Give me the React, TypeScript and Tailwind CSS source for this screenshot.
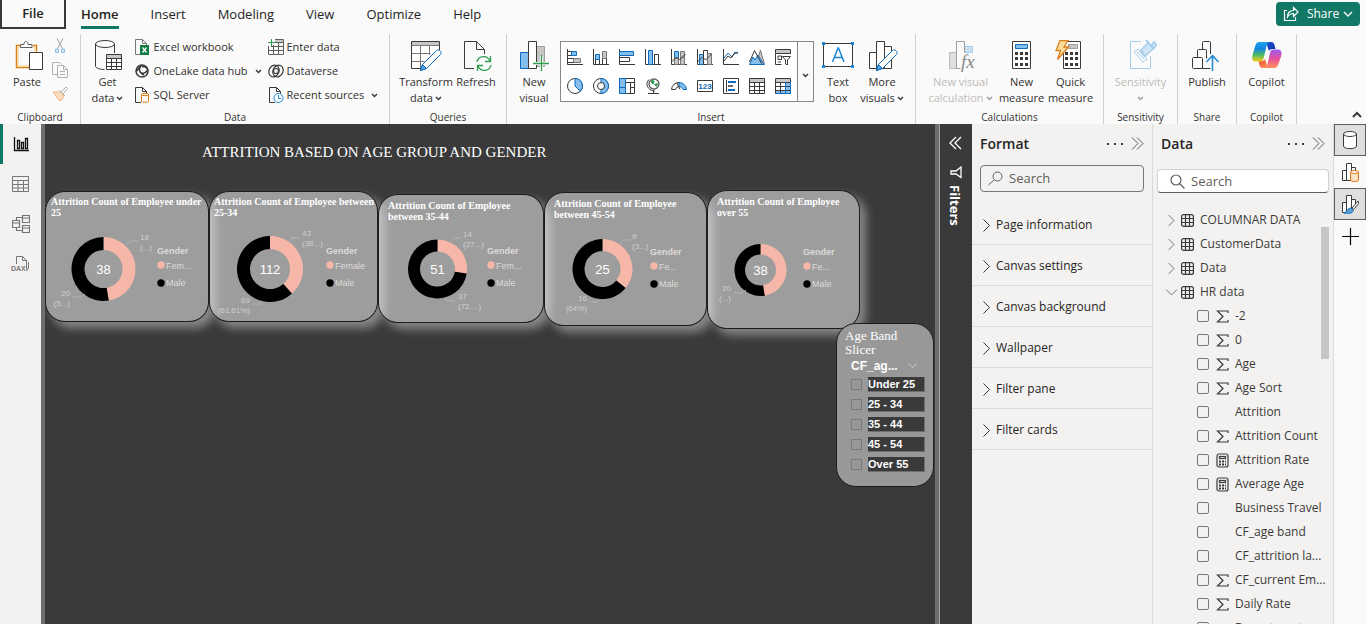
import React from "react";

type Kids = { children?: React.ReactNode };

/* ---------- icon helpers ---------- */
function Ico({ w, h, c = "#3b3a39", sw = 1, children }: { w: number; h: number; c?: string; sw?: number } & Kids) {
  return (
    <svg width={w} height={h} viewBox={`0 0 ${w} ${h}`} fill="none" stroke={c} strokeWidth={sw} className="shrink-0" aria-hidden="true">
      {children}
    </svg>
  );
}
const D = "#3b3a39";
const B = "#0f6cbd";
const LB = "#83beec";
const G = "#c8c6c4";

function Down({ c = D }: { c?: string }) {
  return (
    <Ico w={7} h={5} c={c} sw={1.5}><path d="M1 1l2.5 2.5L6 1" /></Ico>
  );
}

const PasteIcon = () => (
  <Ico w={32} h={32}>
    <path d="M9 5.500H5.500v22H18M22 5.500h3.500v6" stroke="#d97f1d" strokeWidth="1.500" />
    <path d="M9 7H7v19h11M22 7h2v4.500" stroke="#fbdc9b" strokeWidth="1.500" />
    <path d="M9.500 7.500v-3h3.500c0-4 4-4 4 0h4v3z" fill="#fff" stroke="#605e5c" />
    <path d="M18.500 12.500h13v17h-13z" fill="#fff" />
  </Ico>
);
const GetDataIcon = () => (
  <Ico w={32} h={32}>
    <path d="M3.500 4v22c0 2 4 3.500 9 3.500M22.500 4v9" />
    <ellipse cx="13" cy="4" rx="9.500" ry="3.500" />
    <path d="M14.500 14.500h15v15h-15z" fill="#fff" />
    <path d="M15 15h14v3H15z" fill={G} stroke="none" />
    <path d="M14.500 18.500h15M14.500 22.500h15M14.500 26.500h15M19.500 18v11M24.500 18v11" />
  </Ico>
);
const PENCIL = "M10 26l14-14c2-2 6 1 4 4L14 30l-6 2z";
const TransformIcon = () => (
  <Ico w={32} h={32}>
    <path d="M1.500 1.500h27v27h-27z" fill="#fff" stroke="none" />
    <path d="M29.500 10V1.500h-28v27h10" />
    <path d="M2 2h27v3.500H2z" fill={G} stroke="none" />
    <path d="M1.500 5.500h28M1.500 13.500h19M1.500 21.500h13M10.500 5v23M19.500 5v10" stroke="#797775" />
    <path d={PENCIL} fill="#fff" stroke={B} transform="translate(2.500 -1.500)" />
    <path d="M10.500 30.500l2-6 4 4z" fill="#5aa5de" stroke={B} />
  </Ico>
);
const RefreshIcon = () => (
  <Ico w={32} h={32}>
    <path d="M14 28.500H4.500v-27h12l8 8V14M16.500 1.500v8h8" />
    <path d="M17 22c1-6 10-8 13-1M30.500 16v5.500H25M31 25c-1 6-10 8-13 1M17.500 31v-5.500H23" stroke="#2f9e4f" strokeWidth="1.300" />
  </Ico>
);
const NewVisualIcon = () => (
  <Ico w={32} h={32}>
    <path d="M2.500 12.500h8v16h-8z" fill={LB} stroke={B} />
    <path d="M18.500 6.500h8v20h-8z" fill={G} stroke="#a19f9d" />
    <path d="M10.500 1.500h8v27h-8z" fill="#fff" />
    <path d="M16 23.500h15M23.500 16v15" stroke="#fafafa" strokeWidth="3" />
    <path d="M15 23.500h16M23.500 15v16" stroke="#2f9e4f" strokeWidth="1.300" />
  </Ico>
);
const TextBoxIcon = () => (
  <Ico w={32} h={32}>
    <path d="M1.500 3.500h29v23h-29z" fill="#fff" />
    <path d="M10.500 22l5.500-14h.500L22 22M12.500 17.500h7.500" stroke="#1c87d4" strokeWidth="1.500" />
    <path d="M0 2h3v3H0zM29 2h3v3h-3zM0 25h3v3H0zM29 25h3v3h-3z" fill="#1c87d4" stroke="none" />
  </Ico>
);
const MoreVisualsIcon = () => (
  <Ico w={32} h={32}>
    <path d="M3.500 12.500h7v16h-7zM10.500 1.500h8v27h-8zM18.500 6.500h7v22h-7z" fill="#fff" />
    <path d={PENCIL} fill="#fff" stroke={B} transform="translate(2.500 -1.500)" />
    <path d="M10.500 30.500l2-6 4 4z" fill="#5aa5de" stroke={B} />
  </Ico>
);
const VisualCalcIcon = () => (
  <Ico w={32} h={32} c="#a19f9d">
    <path d="M4.500 12.500h7v16h-7z" fill="#e1dfdd" stroke="#bebbb8" />
    <path d="M19.500 6.500h8v6h-8z" fill="#c7e0f4" stroke="#a6cdea" />
    <path d="M11.500 28.500v-27h8v11M11.500 28.500h4" />
    <text x="16" y="28" fontFamily="Liberation Serif, serif" fontStyle="italic" fontSize="19" fill="#8a8886" stroke="none">fx</text>
  </Ico>
);
const dots = [9, 14, 19].flatMap((x) => [13, 18, 24].map((y) => [x, y]));
const MeasureIcon = () => (
  <Ico w={32} h={32}>
    <path d="M6.500 1.500h18v27h-18z" fill="#fff" />
    <path d="M9.500 4.500h12v4h-12z" fill={LB} stroke={B} />
    {dots.map(([x, y]) => <rect key={`${x}-${y}`} x={x} y={y - 1} width="3" height="3" fill={D} stroke="none" />)}
  </Ico>
);
const QuickIcon = () => (
  <Ico w={32} h={32}>
    <path d="M8.500 1.500h17v27h-17z" fill="#fff" />
    <path d="M13.500 4.500h9v4h-9z" fill={G} stroke="#a19f9d" />
    {dots.map(([x, y]) => <rect key={`${x}-${y}`} x={x + 1} y={y - 1} width="3" height="3" fill={D} stroke="none" />)}
    <path d="M5 .500h8L9 7h4.500L2.500 19.500l3-9H1z" fill="#fbdc9b" stroke="#d97f1d" strokeWidth="1.300" />
  </Ico>
);
const SensitivityIcon = () => (
  <Ico w={32} h={32} c="#a6cdea">
    <path d="M16 1.500H5.500v27h20V16" />
    <path d="M9 12l4-3 9 10-4 3zM12 12l7 7M14.500 11l5 6" />
    <path d="M16 10l7-7 3 3 3-4 3 3-4 4-8 7z" fill="#d0e6f6" strokeWidth="1.500" />
    <path d="M21 0l8 9" strokeWidth="2" />
  </Ico>
);
const PublishIcon = () => (
  <Ico w={32} h={32}>
    <path d="M11.500 9.500v-7q0-1 1-1h6q1 0 1 1V14M1.500 27.500v-9q0-1 1-1h8q1 0 1 1v10h-9q-1 0-1-1zM6.500 17v-6.500q0-1 1-1h7q1 0 1 1v8M11.500 28.500h8" />
    <path d="M21.500 31V15.500M15.500 22l6-6.500 6 6.500" stroke="#1c87d4" strokeWidth="1.500" />
  </Ico>
);
const CopilotIcon = () => (
  <svg width="32" height="32" viewBox="0 0 32 32" aria-hidden="true">
    <defs>
      <linearGradient id="cpA" x1="0" y1="0" x2="0" y2="1"><stop offset="0" stopColor="#1aa3f0" /><stop offset=".35" stopColor="#1487e0" /><stop offset=".65" stopColor="#4bb86a" /><stop offset="1" stopColor="#f4cf12" /></linearGradient>
      <linearGradient id="cpB" x1="0" y1="0" x2="0" y2="1"><stop offset="0" stopColor="#9a5bf0" /><stop offset=".5" stopColor="#e8519a" /><stop offset="1" stopColor="#ff8f5a" /></linearGradient>
      <linearGradient id="cpC" x1="0" y1="0" x2="1" y2="1"><stop offset="0" stopColor="#1450d8" /><stop offset="1" stopColor="#1733a8" /></linearGradient>
      <linearGradient id="cpD" x1="0" y1="0" x2="1" y2="1"><stop offset="0" stopColor="#f0483e" /><stop offset="1" stopColor="#ff9a4e" /></linearGradient>
    </defs>
    <path d="M15 2h5c2 0 3 1 3.500 3l1 4h-3c-2 0-3 1-3.500 2z" fill="url(#cpC)" />
    <path d="M17 28h-5c-2 0-3-1-3.500-3l-1-4h3c2 0 3-1 3.500-2z" fill="url(#cpD)" />
    <path d="M19 2H8.500C6 2 5 3.500 4.200 6L1.500 15c-1 4 0 6.500 3.500 6.500h4c2 0 3-1 3.600-3L15.500 6c.600-2.500 1.500-4 3.500-4z" fill="url(#cpA)" />
    <path d="M13 28h10c2.500 0 3.600-1.500 4.400-4l2.800-8c1-4 0-6.500-3.500-6.500h-4c-2 0-3 1-3.600 3L16.500 24c-.600 2.500-1.500 4-3.500 4z" fill="url(#cpB)" />
  </svg>
);

/* ---------- 16px icons ---------- */
const CutIcon = () => (
  <Ico w={16} h={16} c="#a19f9d">
    <path d="M5 .500l5.500 10M11 .500L5.500 10.500" />
    <path d="M3.500 11h3v3.500h-3zM9.500 11h3v3.500h-3z" stroke="#8cc0e4" fill="#d0e6f6" />
  </Ico>
);
const CopyIcon = () => (
  <Ico w={16} h={16} c="#b3b0ad">
    <path d="M5 12.500H.500v-12h7l2 2" />
    <path d="M5.500 3.500h6l4 4v8h-10zM11.500 3.500v4h4M8 9.500h5M8 12.500h5" />
  </Ico>
);
const BrushIcon = () => (
  <Ico w={16} h={16} c="#b3b0ad">
    <path d="M1 6l5 7 3 2 3-5-5-4z" fill="#fbdcc0" stroke="#eeb78a" />
    <path d="M7 4l6 6M9 6l5-5 1.500 1.500L11 8" />
  </Ico>
);
const DOC = "M6 15.500H.500V.500h7l4 4V7M7.500.500v4h4";
const ExcelIcon = () => (
  <Ico w={16} h={16}>
    <path d={DOC} stroke="#797775" />
    <path d="M5 6h9v10H5z" fill="#107c41" stroke="none" />
    <path d="M7.500 8.500l4 5M11.500 8.500l-4 5" stroke="#fff" strokeWidth="1.300" />
  </Ico>
);
const OneLakeIcon = () => (
  <Ico w={16} h={16} sw={1.5}>
    <circle cx="7" cy="8" r="6" />
    <path d="M1 8c3-1 3-5 6-6M6 3c-3 3-1 8 3 9M13 6c-2 5-6 5-8 3M7 4c2-1 5 0 6 3" />
  </Ico>
);
const SqlIcon = () => (
  <Ico w={16} h={16}>
    <path d={DOC} />
    <path d="M6.500 7.500v7c0 1 7 1 7 0v-7" fill="#fff" stroke="#e07414" />
    <ellipse cx="10" cy="7.500" rx="3.500" ry="1.200" stroke="#e07414" fill="#fff" />
  </Ico>
);
const EnterIcon = () => (
  <Ico w={16} h={16}>
    <path d="M7 1h9v2H7z" fill={G} stroke="none" />
    <path d="M7 .500h8.500v15H.500V7M3 7.500h12.500M.500 11.500h15M5.500 6v9.500M10.500 3.500v12M7 3.500h8.500" stroke="#605e5c" />
    <path d="M0 3.500h7M3.500 0v7" stroke="#2f9e4f" />
  </Ico>
);
const DataverseIcon = () => (
  <Ico w={16} h={16} sw={1.2}>
    <ellipse cx="6" cy="8" rx="5" ry="6" transform="rotate(25 6 8)" />
    <ellipse cx="10" cy="8" rx="5" ry="6" transform="rotate(25 10 8)" />
    <circle cx="8" cy="8" r="2.500" />
  </Ico>
);
const RecentIcon = () => (
  <Ico w={16} h={16}>
    <path d={DOC} transform="translate(1 0)" />
    <circle cx="10.500" cy="11" r="4.500" stroke="#1c87d4" fill="#fff" />
    <path d="M10.500 8v3.500H13" stroke="#1c87d4" />
  </Ico>
);

const AX = "M.500 0v15.500H16";
const gallery: { label: string; art: React.ReactNode }[] = [
  { label: "Stacked bar chart", art: <><path d={AX} /><path d="M.500 2.500h4v4h-4z" /><path d="M4.500 2.500h5v4h-5z" fill={LB} stroke={B} /><path d="M.500 9.500h6v4h-6z" /><path d="M6.500 9.500h7v4h-7z" fill={G} stroke="#797775" /></> },
  { label: "Stacked column chart", art: <><path d={AX} /><path d="M2.500 10.500h4v5h-4z" /><path d="M2.500 5.500h4v5h-4z" fill={LB} stroke={B} /><path d="M9.500 9.500h4v6h-4z" /><path d="M9.500 2.500h4v7h-4z" fill={G} stroke="#797775" /></> },
  { label: "Clustered bar chart", art: <><path d={AX} /><path d="M.500 2.500h14v4H.500z" fill={LB} stroke={B} /><path d="M.500 8.500h10v4H.500z" fill="#fff" /></> },
  { label: "Clustered column chart", art: <><path d={AX} /><path d="M3.500 1.500h4v14h-4z" fill={LB} stroke={B} /><path d="M9.500 5.500h4v10h-4z" fill="#fff" /></> },
  { label: "Line and stacked column chart", art: <><path d={AX} /><path d="M9.500 2.500h4v6h-4z" fill={G} stroke="#797775" /><path d="M3.500 2.500h4v7h-4z" fill={LB} stroke={B} /><path d="M3.500 9.500h4v6h-4zM9.500 8.500h4v7h-4z" fill={G} stroke="#797775" /><path d="M.500 13l5-5 3 3 6-6" /></> },
  { label: "Line and clustered column chart", art: <><path d={AX} /><path d="M2.500 5.500h4v10h-4z" fill={LB} stroke={B} /><path d="M6.500 1.500h4v14h-4z" fill="#fff" /><path d="M10.500 4.500h4v11h-4z" fill={G} stroke="#797775" /><path d="M.500 13l5-5 3 3 6-6" /></> },
  { label: "Line chart", art: <><path d={AX} /><path d="M1 9l4-5 4 4 3-5 3 2" stroke={B} /><path d="M1 12l4-5 3 2 3-4 4-2" /></> },
  { label: "Area chart", art: <><path d="M7 15.500L11.500 1l4 14.500z" fill={G} stroke="#797775" /><path d="M.500 15.500L4 8l2 3 3-5 6 9.500z" fill={LB} stroke={B} /><path d="M.500 13l5-11.500 7 13" /></> },
  { label: "Slicer", art: <><path d="M.500.500h15v4H.500z" fill={G} /><path d="M.500 4.500v11h6M3 7h3.500v3.500H3zM3 13h3" /><path d="M7.500 7.500h8L12.500 11v5l-2-1v-4z" fill="#fff" /></> },
  { label: "Pie chart", art: <><circle cx="8" cy="8" r="7.500" fill="#fff" /><path d="M8 8V.500a7.500 7.500 0 0 1 5.300 12.800z" fill={LB} stroke={B} /></> },
  { label: "Donut chart", art: <><circle cx="8" cy="8" r="7.500" fill="#fff" /><path d="M8 .500a7.500 7.500 0 0 1 0 15v-4a3.500 3.500 0 0 0 0-7z" fill={LB} stroke={B} /><circle cx="8" cy="8" r="3.500" fill="#fff" /></> },
  { label: "Treemap", art: <><path d="M.500.500h15v15H.500z" fill="#fff" /><path d="M.500.500h6v15h-6z" fill={LB} stroke={B} /><path d="M.500 9.500h6" stroke={B} /><path d="M6.500 4.500h9M11.500 4v11M11.500 9.500h4" /></> },
  { label: "Map", art: <><circle cx="9" cy="6" r="5" fill="#fff" stroke="#605e5c" strokeWidth="1.300" /><path d="M6 4l2-2 1 2-1 2zM9.500 6.500l3-1-1 3z" fill="#2f9e4f" stroke="#2f9e4f" /><path d="M4 1.500c-4 4-2 11 6 11.500M8.500 13v2.500M3 15.500h11" /></> },
  { label: "Gauge", art: <><path d="M.500 11.500a7.500 7.500 0 0 1 8-7l0 4a4 4 0 0 0-4 3z" fill="#fff" /><path d="M8 4.500a7.500 7.500 0 0 1 7.500 7H12a4 4 0 0 0-4-3z" fill={LB} stroke={B} /><path d="M6 5l3 6.500" /></> },
  { label: "Card", art: <><path d="M.500 2.500h15v11H.500z" fill="#fff" /><text x="8" y="11" textAnchor="middle" fontSize="8" fontWeight="700" fontFamily="Liberation Sans, sans-serif" fill={B} stroke="none">123</text></> },
  { label: "Multi-row card", art: <><path d="M.500.500h15v15H.500z" fill="#fff" /><path d="M3.500 2v12" stroke={D} /><path d="M5 4h8M5 12h7" stroke={B} strokeWidth="2" /><path d="M5 8h5" strokeWidth="1.500" /></> },
  { label: "Table", art: <><path d="M.500.500h15v15H.500z" fill="#fff" /><path d="M1 1h14v3H1z" fill={G} stroke="none" /><path d="M.500 4.500h15M.500 8.500h15M.500 12.500h15M5.500 4v11M10.500 4v11" /></> },
  { label: "Matrix", art: <><path d="M.500.500h15v15H.500z" fill="#fff" /><path d="M1 1h14v3H1z" fill={G} stroke="none" /><path d="M11 5h4v10h-4zM1 12h14v3H1z" fill={LB} stroke="none" /><path d="M.500 4.500h15M.500 8.500h15M.500 12.500h15M5.500 4v11" /><path d="M10.500 4v11M15.500 4v11.500H.500" stroke={B} /></> },
];

/* ---------- ribbon ---------- */
function Group({ label, w, children }: { label: string; w: string } & Kids) {
  return (
    <section className={`flex shrink-0 flex-col border-r border-[#d2d0ce] ${w}`} aria-label={label}>
      <div className="flex flex-1 items-start justify-center">{children}</div>
      <div className="h-[13px] text-center text-[10px] leading-3 text-[#323130]">{label}</div>
    </section>
  );
}
function Big({ icon, a, b, w, drop, off }: { icon: React.ReactNode; a: string; b?: string; w: string; drop?: boolean; off?: boolean }) {
  return (
    <button type="button" disabled={off} className={`flex shrink-0 flex-col items-center pt-1.5 text-[11px] leading-4 whitespace-nowrap ${w} ${off ? "text-[#bebbb8]" : "text-[#323130]"}`}>
      {icon}
      <span className="pt-0.5">{a}</span>
      <span className="flex h-4 items-center gap-0.5">{b}{drop && <Down c={off ? "#a19f9d" : D} />}</span>
    </button>
  );
}
function Small({ icon, t, drop }: { icon: React.ReactNode; t: string; drop?: boolean }) {
  return (
    <button type="button" className="flex h-6 items-center gap-[3px] text-[11px] whitespace-nowrap text-[#323130]">
      {icon}<span>{t}</span>{drop && <span className="pl-1"><Down /></span>}
    </button>
  );
}

const tabs = ["Insert", "Modeling", "View", "Optimize", "Help"];

function Ribbon() {
  return (
    <header className="shrink-0 bg-[#fafafa]">
      <div className="flex h-[29px] items-stretch text-[13px] text-[#252423]">
        <button type="button" className="w-[66px] border-2 border-t-0 border-[#3b3a39] font-semibold">File</button>
        <nav className="flex items-stretch gap-8 pl-[15px]">
          <button type="button" className="relative font-semibold">
            Home
            <span className="absolute inset-x-0 bottom-0 h-[3px] bg-[#117865]" />
          </button>
          {tabs.map((t) => <button key={t} type="button">{t}</button>)}
        </nav>
        <button type="button" className="mt-0.5 mr-1.5 ml-auto flex h-6 w-[84px] items-center justify-center gap-2 rounded-sm bg-[#117865] text-[12px] font-medium text-white">
          <Ico w={16} h={16} c="#fff" sw={1.2}><path d="M4 4.500H1.500v10h11V11M4.500 11c0-4 2-6.500 6-6.500V1.500L15 6l-4.500 4.500V7.500c-3 0-4.500 1-6 3.500z" /></Ico>
          <span className="flex items-center gap-1">Share<Ico w={10} h={7} c="#fff" sw={1.3}><path d="M1 1l4 4 4-4" /></Ico></span>
        </button>
      </div>
      <div className="flex pt-[5px]">
        <div className="flex h-[90px] grow">
          <Group label="Clipboard" w="w-[81px]">
            <Big icon={<PasteIcon />} a="Paste" w="w-[42px]" />
            <div className="flex flex-col gap-2 pt-1 pr-1.5 pl-1">
              <button type="button" aria-label="Cut"><CutIcon /></button>
              <button type="button" aria-label="Copy"><CopyIcon /></button>
              <button type="button" aria-label="Format painter"><BrushIcon /></button>
            </div>
          </Group>
          <Group label="Data" w="w-[309px]">
            <Big icon={<GetDataIcon />} a="Get" b="data" drop w="w-[42px]" />
            <div className="flex w-[139px] flex-col items-start pt-px pl-1.5">
              <Small icon={<ExcelIcon />} t="Excel workbook" />
              <Small icon={<OneLakeIcon />} t="OneLake data hub" drop />
              <Small icon={<SqlIcon />} t="SQL Server" />
            </div>
            <div className="flex w-[116px] flex-col items-start pt-px">
              <Small icon={<EnterIcon />} t="Enter data" />
              <Small icon={<DataverseIcon />} t="Dataverse" />
              <Small icon={<RecentIcon />} t="Recent sources" drop />
            </div>
          </Group>
          <Group label="Queries" w="w-[117px]">
            <Big icon={<TransformIcon />} a="Transform" b="data" drop w="w-14" />
            <Big icon={<RefreshIcon />} a="Refresh" w="w-11" />
          </Group>
          <Group label="Insert" w="w-[409px]">
            <Big icon={<NewVisualIcon />} a="New" b="visual" w="w-[52px]" />
            <div className="mt-[7px] flex border border-[#8a8886] bg-white">
              <div className="grid grid-cols-9 gap-x-2.5 gap-y-[13px] px-1.5 py-[7px]">
                {gallery.map((g) => (
                  <button key={g.label} type="button" aria-label={g.label}><Ico w={16} h={16}>{g.art}</Ico></button>
                ))}
              </div>
              <button type="button" aria-label="More" className="flex w-4 items-center justify-center border-l border-[#8a8886] bg-[#fafafa] pt-2"><Down /></button>
            </div>
            <Big icon={<TextBoxIcon />} a="Text" b="box" w="w-12" />
            <div className="pr-3"><Big icon={<MoreVisualsIcon />} a="More" b="visuals" drop w="w-10" /></div>
          </Group>
          <Group label="Calculations" w="w-[188px]">
            <Big icon={<VisualCalcIcon />} a="New visual" b="calculation" drop off w="w-[74px]" />
            <Big icon={<MeasureIcon />} a="New" b="measure" w="w-12" />
            <Big icon={<QuickIcon />} a="Quick" b="measure" w="w-[50px]" />
          </Group>
          <Group label="Sensitivity" w="w-[74px]"><Big icon={<SensitivityIcon />} a="Sensitivity" drop off w="w-16" /></Group>
          <Group label="Share" w="w-[59px]"><Big icon={<PublishIcon />} a="Publish" w="w-12" /></Group>
          <Group label="Copilot" w="w-[60px]"><Big icon={<CopilotIcon />} a="Copilot" w="w-12" /></Group>
        </div>
        <button type="button" aria-label="Collapse ribbon" className="self-end pr-1 pb-1.5"><Ico w={10} h={7} sw={2}><path d="M1 6l4-4 4 4" /></Ico></button>
      </div>
    </header>
  );
}

/* ---------- report canvas ---------- */
type Donut = {
  title: string; box: string; pad: string; w: number; h: number;
  cx: number; cy: number; R: number; r: number; total: string; share: number;
  labels: { x: number; y: number; end?: boolean; t: [string, string]; line: string }[];
  lx: number; ly: number; fem: string;
};
const donuts: Donut[] = [
  { title: "Attrition Count of Employee under 25", box: "left-[4px] top-[67px] w-[164px] h-[131px]", pad: "pl-[5px] pr-[5px] pt-[4px]", w: 162, h: 129, cx: 57.5, cy: 77, R: 32, r: 19, total: "38", share: 18 / 38,
    labels: [{ x: 94, y: 48, t: ["18", "(...)"], line: "M80 53l4-4h8" }, { x: 24, y: 104, end: true, t: ["20", "(5...)"], line: "M27 105h8l4-3" }], lx: 111, ly: 59, fem: "Fem..." },
  { title: "Attrition Count of Employee between 25-34", box: "left-[168px] top-[67px] w-[169px] h-[131px]", pad: "pl-[4px] pt-[4px]", w: 167, h: 129, cx: 60, cy: 77, R: 33, r: 20, total: "112", share: 43 / 112,
    labels: [{ x: 92, y: 44, t: ["43", "(38...)"], line: "M79 50l3-4h8" }, { x: 40, y: 111, end: true, t: ["69", "(61.61%)"], line: "M43 112h8v-3" }], lx: 116, ly: 59, fem: "Female" },
  { title: "Attrition Count of Employee between 35-44", box: "left-[337px] top-[70px] w-[166px] h-[129px]", pad: "px-[9px] pt-[5px]", w: 164, h: 127, cx: 58.5, cy: 74, R: 29.5, r: 17.5, total: "51", share: 14 / 51,
    labels: [{ x: 84, y: 42, t: ["14", "(27...)"], line: "M72 46l3-3h7" }, { x: 79, y: 104, t: ["37", "(72....)"], line: "M67 102v4h9" }], lx: 108, ly: 56, fem: "Fem..." },
  { title: "Attrition Count of Employee between 45-54", box: "left-[503px] top-[68px] w-[163px] h-[134px]", pad: "px-[9px] pt-[5px]", w: 161, h: 132, cx: 57.5, cy: 76, R: 30, r: 18, total: "25", share: 9 / 25,
    labels: [{ x: 87, y: 46, t: ["9", "(3...)"], line: "M75 51l3-4h7" }, { x: 42, y: 108, end: true, t: ["16", "(64%)"], line: "M45 109h8v-2" }], lx: 105, ly: 59, fem: "Fe..." },
  { title: "Attrition Count of Employee over 55", box: "left-[666px] top-[66px] w-[153px] h-[139px]", pad: "px-[9px] pt-[5px]", w: 151, h: 137, cx: 52.5, cy: 79, R: 26, r: 15.5, total: "38", share: 18 / 38,
    labels: [{ x: 23, y: 100, end: true, t: ["20", "(...)"], line: "M26 102h9l3-3" }], lx: 95, ly: 61, fem: "Fe..." },
];

function ringPath(d: Donut, from: number, to: number) {
  const p = (a: number, rad: number) => `${d.cx + rad * Math.sin(a * 2 * Math.PI)} ${d.cy - rad * Math.cos(a * 2 * Math.PI)}`;
  const big = to - from > 0.5 ? 1 : 0;
  return `M${p(from, d.R)}A${d.R} ${d.R} 0 ${big} 1 ${p(to, d.R)}L${p(to, d.r)}A${d.r} ${d.r} 0 ${big} 0 ${p(from, d.r)}Z`;
}

function DonutCard({ d }: { d: Donut }) {
  return (
    <article className={`absolute overflow-visible rounded-[20px] border border-[#1c1c1c] bg-white/50 shadow-[6px_6px_10px_rgba(255,255,255,0.4)] ${d.box}`}>
      <h2 className={`relative z-10 font-['Liberation_Serif',serif] text-[10px] leading-[11px] font-bold text-white ${d.pad}`}>{d.title}</h2>
      <svg className="absolute inset-0" width={d.w} height={d.h} viewBox={`0 0 ${d.w} ${d.h}`} fontFamily="Liberation Sans, Arial, sans-serif" role="img" aria-label={d.title}>
        <path d={ringPath(d, 0, d.share)} fill="#f7b7a8" />
        <path d={ringPath(d, d.share, 0.99999)} fill="#000" />
        <text x={d.cx} y={d.cy + 5} textAnchor="middle" fontSize="13" fill="#fff">{d.total}</text>
        {d.labels.map((l) => (
          <g key={l.t[0]} fontSize="8" fill="#d2d0ce" textAnchor={l.end ? "end" : "start"}>
            <path d={l.line} fill="none" stroke="#b4b4b4" />
            <text x={l.x} y={l.y}>{l.t[0]}</text>
            <text x={l.x} y={l.y + 10}>{l.t[1]}</text>
          </g>
        ))}
        <g fontSize="9" fill="#dddbd9">
          <text x={d.lx} y={d.ly + 3} fontWeight="700">Gender</text>
          <circle cx={d.lx + 4} cy={d.ly + 14} r="3.700" fill="#f7b7a8" />
          <text x={d.lx + 9} y={d.ly + 18}>{d.fem}</text>
          <circle cx={d.lx + 4} cy={d.ly + 32} r="3.700" fill="#000" />
          <text x={d.lx + 9} y={d.ly + 35}>Male</text>
        </g>
      </svg>
    </article>
  );
}

const bands = ["Under 25", "25 - 34", "35 - 44", "45 - 54", "Over 55"];

function Canvas() {
  return (
    <main className="flex min-w-0 grow border-l-4 border-[#6e6e6e] bg-[#3a3a3a]">
      <div className="relative -ml-1 min-w-0 grow overflow-hidden">
        <h1 className="absolute top-[18px] left-[161px] font-['Liberation_Serif',serif] text-[15px] leading-5 whitespace-nowrap text-white">ATTRITION BASED ON AGE GROUP AND GENDER</h1>
        {donuts.map((d) => <DonutCard key={d.title} d={d} />)}
        <section className="absolute top-[199px] left-[795px] h-[164px] w-[98px] rounded-[20px] border border-[#1c1c1c] bg-[#989898] px-2 pt-[5px]">
          <h2 className="font-['Liberation_Serif',serif] text-[13px] leading-[14px] text-white">Age Band Slicer</h2>
          <div className="flex items-center justify-between pt-px pr-2 pl-1.5 font-['Liberation_Sans',sans-serif] text-[12px] leading-4 font-bold text-white">
            CF_ag...<Ico w={9} h={6} c="#c8c8c8"><path d="M.500.500l4 4 4-4" /></Ico>
          </div>
          {bands.map((b) => (
            <label key={b} className="flex h-5 items-center gap-[6px] pl-1.5 font-['Liberation_Sans',sans-serif] text-[11px] leading-[14px] font-bold text-white">
              <input type="checkbox" className="size-[11px] shrink-0 appearance-none border border-[#7a7a7a]" />
              <span className="w-[57px] border-r border-b border-[#6e6e6e] bg-[#3a3a3a]">{b}</span>
            </label>
          ))}
        </section>
      </div>
      <div className="w-[5px] shrink-0 border-r border-[#a0a0a0] bg-[#6e6e6e]" />
    </main>
  );
}

/* ---------- side panes ---------- */
function Head({ t }: { t: string }) {
  return (
    <div className="flex h-[39px] shrink-0 items-center px-2">
      <h2 className="grow text-[14px] font-semibold text-[#252423]">{t}</h2>
      <button type="button" aria-label="More options" className="pr-2"><Ico w={16} h={4}><path d="M0 2h2M7 2h2M14 2h2" strokeWidth="2" /></Ico></button>
      <button type="button" aria-label="Collapse pane"><Ico w={13} h={13} c="#605e5c"><path d="M1 .500l6 6-6 6M6 .500l6 6-6 6" /></Ico></button>
    </div>
  );
}

const sections = ["Page information", "Canvas settings", "Canvas background", "Wallpaper", "Filter pane", "Filter cards"];
const tables = ["COLUMNAR DATA", "CustomerData", "Data", "HR data"];
const fields: [string, string][] = [
  ["s", "-2"], ["s", "0"], ["s", "Age"], ["s", "Age Sort"], ["", "Attrition"], ["s", "Attrition Count"], ["c", "Attrition Rate"], ["c", "Average Age"],
  ["", "Business Travel"], ["", "CF_age band"], ["", "CF_attrition la..."], ["s", "CF_current Em..."], ["s", "Daily Rate"], ["", "Department"],
];

function FormatPane() {
  return (
    <aside className="w-[181px] shrink-0 border-r border-[#dddbd9] bg-[#f3f2f1]">
      <Head t="Format" />
      <label className="mx-2 mt-0.5 flex h-[27px] items-center gap-1.5 rounded-sm border border-[#797775] px-[7px]">
        <Ico w={15} h={15} c="#605e5c"><circle cx="9.500" cy="5.500" r="4.500" /><path d="M6 9L.500 14" /></Ico>
        <input aria-label="Search format options" placeholder="Search" className="w-full min-w-0 bg-transparent pt-px text-[13px] outline-none placeholder:text-[#605e5c]" />
      </label>
      <ul className="mt-3">
        {sections.map((s) => (
          <li key={s} className="border-b border-[#dddbd9]">
            <button type="button" className="flex h-10 w-full items-center gap-[5px] pt-0.5 pl-[11px] text-[12px] font-medium text-[#252423]">
              <Ico w={8} h={13}><path d="M.500.500l6 6-6 6" /></Ico>{s}
            </button>
          </li>
        ))}
      </ul>
    </aside>
  );
}

function DataPane() {
  return (
    <aside className="flex w-[181px] shrink-0 flex-col overflow-hidden border-r border-[#dddbd9] bg-[#f3f2f1]">
      <Head t="Data" />
      <label className="mx-1 mt-1.5 flex h-6 shrink-0 items-center gap-1.5 rounded-sm border border-[#d2d0ce] border-b-[#605e5c] bg-white pr-2 pl-3">
        <Ico w={15} h={15} c="#605e5c" sw={1.2}><circle cx="6" cy="6" r="5" /><path d="M9.500 9.500l5 5" /></Ico>
        <input aria-label="Search data" placeholder="Search" className="w-full min-w-0 bg-transparent pt-0.5 text-[13px] outline-none placeholder:text-[#605e5c]" />
      </label>
      <div className="relative mt-[15px] min-h-0 grow overflow-hidden text-[12px] text-[#3b3a39]">
        <ul className="pl-4">
          {tables.map((t, i) => (
            <li key={t} className="flex h-6 items-center whitespace-nowrap">
              <span className="-ml-1.5 flex w-4 justify-center">
                {i === 3 ? <Ico w={13} h={7} c="#797775"><path d="M1 .500l5.500 5.500L12 .500" /></Ico> : <Ico w={7} h={13} c="#797775"><path d="M.500 1L6 6.500.500 12" /></Ico>}
              </span>
              <span className="pr-1.5 pl-0.5"><Ico w={13} h={13} sw={1.2}><rect x=".600" y=".600" width="11.800" height="11.800" rx="2" /><path d="M0 4.500h13M0 8.500h13M4.500 0v13M8.500 0v13" /></Ico></span>
              {t}
            </li>
          ))}
          {fields.map(([k, t]) => (
            <li key={t}>
              <label className="flex h-6 items-center pl-7 whitespace-nowrap">
                <input type="checkbox" className="size-3 shrink-0 appearance-none rounded-[2px] border border-[#797775]" />
                <span className="flex w-[26px] shrink-0 justify-end pr-[6px]">
                  {k === "s" && <Ico w={13} h={13} sw={1.2}><path d="M12 3V1H1.500L7 6.500 1.500 12H12v-2" /></Ico>}
                  {k === "c" && <Ico w={13} h={15} sw={1.2}><rect x="1" y="1" width="11" height="13" rx="2" /><rect x="3.500" y="3.500" width="6" height="2" /><path d="M3 8.500h7M3 11.500h7" strokeWidth="2" strokeDasharray="2 1" /></Ico>}
                </span>
                {t}
              </label>
            </li>
          ))}
        </ul>
        <div className="absolute top-[19px] right-1 h-[132px] w-2 bg-[#c8c6c4]" />
      </div>
    </aside>
  );
}

const railBtn = "flex h-8 w-full items-center justify-center";

export default function App() {
  return (
    <div className="flex h-screen flex-col overflow-hidden bg-[#3a3a3a] font-['Open_Sans','Noto_Sans',sans-serif]">
      <Ribbon />
      <div className="flex min-h-0 grow">
        <nav className="flex w-[41px] shrink-0 flex-col bg-[#f3f2f1]">
          <button type="button" aria-label="Report view" className="flex h-10 items-center justify-center border-l-[3px] border-[#117865] pr-[3px]">
            <Ico w={16} h={16} c="#111" sw={1.3}><path d="M1.500 1v13.500H16M4.500 4.500h2v8h-2zM8.500 6.500h2v6h-2zM12.500 2.500h2v10h-2z" /></Ico>
          </button>
          <button type="button" aria-label="Table view" className="flex h-10 items-center justify-center">
            <Ico w={17} h={16} c="#797775"><path d="M.500.500h16v15H.500zM.500 4.500h16M.500 8.500h16M.500 12h16M6 4v12M11.500 4v12" /></Ico>
          </button>
          <button type="button" aria-label="Model view" className="flex h-10 items-center justify-center">
            <Ico w={18} h={18} c="#797775" sw={1.2}><path d="M.500 5.500h7v7h-7zM.500 8h7M10.500.500h7v7h-7zM10.500 3h7M10.500 10.500h7v7h-7zM10.500 13h7M4.500 5.500v-3h6M4.500 12.500v3h6" /></Ico>
          </button>
          <button type="button" aria-label="DAX query view" className="flex h-10 items-center justify-center">
            <Ico w={20} h={18} c="#797775"><path d="M5.500 9V1.500h6l4 4v9M11.500 1.500v4h4M17.500 7v6l-2 3" /><text x="0" y="16" fontSize="7" fontWeight="700" fontFamily="Liberation Sans, sans-serif" fill="#797775" stroke="none">DAX</text></Ico>
          </button>
        </nav>
        <Canvas />
        <aside className="flex w-8 shrink-0 flex-col items-center pt-3 pr-0.5 text-white">
          <button type="button" aria-label="Expand filters"><Ico w={13} h={14} c="#fff" sw={1.3}><path d="M7 1L1 7l6 6M12 1L6 7l6 6" /></Ico></button>
          <span className="pt-4"><Ico w={13} h={13} c="#fff" sw={1.3}><path d="M12 1v10.500L7 8H2V5h5z" /></Ico></span>
          <h2 className="pt-1.5 text-[13px] leading-4 font-bold [writing-mode:vertical-rl]">Filters</h2>
        </aside>
        <FormatPane />
        <DataPane />
        <nav className="flex w-8 shrink-0 flex-col bg-[#faf9f8]">
          <button type="button" aria-label="Data" className={`${railBtn} border border-[#605e5c] bg-[#e1dfdd]`}>
            <Ico w={16} h={20}><path d="M1.500 4v12c0 3.500 13 3.500 13 0V4" fill="#fff" /><ellipse cx="8" cy="4" rx="6.500" ry="2.500" fill="#fff" /></Ico>
          </button>
          <button type="button" aria-label="Build" className={railBtn}>
            <Ico w={18} h={19}><path d="M1.500 7.500h4v10h-4zM5.500.500h5v17h-5zM10.500 4.500h4v4" fill="#fff" /><path d="M9.500 9v8c0 2 8 2 8 0V9" fill="#fbe3c8" stroke="#e07414" /><ellipse cx="13.500" cy="9" rx="4" ry="1.500" fill="#fff" stroke="#e07414" /></Ico>
          </button>
          <button type="button" aria-label="Format" className={`${railBtn} border border-[#605e5c] bg-[#e1dfdd]`}>
            <Ico w={18} h={19}><path d="M1.500 7.500h4v10h-4zM5.500.500h5v17h-5zM10.500 4.500h4v8h-4z" fill="#fff" /><path d="M17 6l-6 7 1.500 1.500L18 8z" fill="#fff" /><path d="M3 18c3-1 3-4 6-5 3 0 4 3 2 4.500-2 1-5 1-8 .500z" fill="#5aa5de" stroke={B} /></Ico>
          </button>
          <button type="button" aria-label="Add" className={railBtn}><Ico w={17} h={17} c="#000" sw={1.2}><path d="M8.500 0v17M0 8.500h17" /></Ico></button>
        </nav>
      </div>
    </div>
  );
}
